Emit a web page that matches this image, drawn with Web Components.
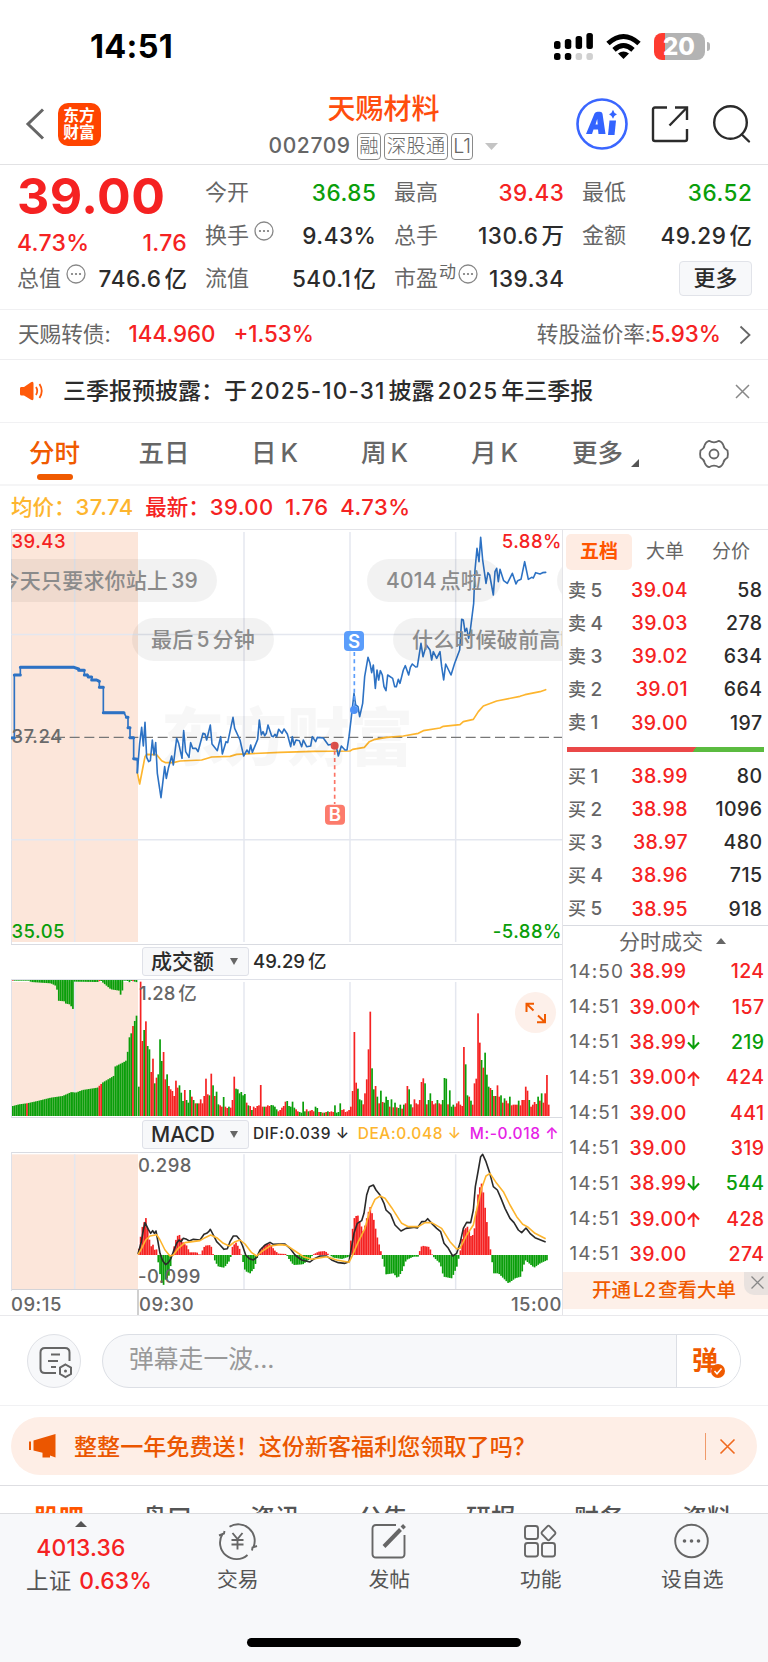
<!DOCTYPE html>
<html lang="zh-CN">
<head>
<meta charset="utf-8">
<title>天赐材料 002709</title>
<style>
	html {
		--red: #f52222;
		--green: #0a9e0a;
		--brand: #f05a00;
		--text: #2b2b2b;
		--muted: #666;
		--line: #ebebed;
		--grid: #e4e7ef;
		--peach: #fce6da;
		--amber: #fdb52e;
	}
	body {
		margin: 0;
		width: 768px;
		height: 1662px;
		overflow: hidden;
		background: #fff;
		color: var(--text);
		font-family: Inter, "Noto Sans CJK SC", sans-serif;
		font-size: 22px;
		line-height: 1.2;
	}
</style>
</head>
<body>
<stock-page></stock-page>

<script>
(function() {
	/**
	 * Small base class, every component only gives its css and html
	*/
	class BaseElement extends HTMLElement {
		constructor() {
			super();
			this.rendered = false;
		}

		styles() {
			return '';
		}

		markup() {
			return '<slot></slot>';
		}

		connectedCallback() {
			if (!this.rendered) {
				this.attachShadow({mode: 'open'});
				this.shadowRoot.innerHTML = `<style>
					:host { display: block; box-sizing: border-box; }
					* { box-sizing: border-box; }
					svg { display: block; overflow: visible; }
					${this.styles()}
				</style>${this.markup()}`;
				this.rendered = true;
			}
		}
	}

	class StatusBar extends BaseElement {
		styles() {
			return `
			:host { display: flex; height: 82px; padding: 10px 58.500px 0 90px; align-items: center; justify-content: space-between; color: #000; }
			.time { font-size: 32.500px; font-weight: 700; letter-spacing: 0.300px; }
			.right { display: flex; align-items: center; gap: 13px; }
			.battery { position: relative; width: 51px; height: 27px; border-radius: 8px; overflow: hidden; background: linear-gradient(90deg, #fe3b30 10.5px, #b3b3b3 10.5px); color: #fff; font-size: 24px; font-weight: 800; line-height: 27px; text-align: center; }
			.tip { width: 3px; height: 9px; border-radius: 0 3px 3px 0; background: #b3b3b3; margin-left: -11px; }`;
		}

		markup() {
			return `<div class="time">14:51</div>
			<div class="right">
				<svg width="39" height="27" viewBox="0 0 39 27">
					<g>
						<rect x="0" y="8" width="6.500" height="8" rx="2.500"/><rect x="10.800" y="6" width="6.500" height="10" rx="2.500"/>
						<rect x="21.600" y="3" width="6.500" height="13" rx="2.500"/><rect x="32.400" y="0" width="6.500" height="16" rx="2.500"/>
						<rect x="0" y="20" width="6.500" height="7" rx="2.500"/><rect x="10.800" y="20" width="6.500" height="7" rx="2.500"/>
					</g>
					<g fill="#d0d0d0"><rect x="21.600" y="20" width="6.500" height="7" rx="2.500"/><rect x="32.400" y="20" width="6.500" height="7" rx="2.500"/></g>
				</svg>
				<svg width="35" height="25" viewBox="0 0 35 25" fill="none" stroke="#000" stroke-width="5">
					<path d="M2 9.500Q17.500 -4.500 33 9.500"/><path d="M8 15.800Q17.500 7.200 27 15.800"/>
					<path d="M12 19.500Q17.500 15.500 23 19.500L17.500 25Z" fill="#000" stroke="none"/>
				</svg>
				<div class="battery">20</div>
				<div class="tip"></div>
			</div>`;
		}
	}

	class StockHeader extends BaseElement {
		styles() {
			return `
			:host { display: grid; grid-template-columns: 200px 1fr 200px; height: 83px; padding: 0 18px 0 25px; border-bottom: 1px solid #e2e2e4; }
			.left, .right { display: flex; align-items: center; padding-top: 2px; }
			.left { gap: 12px; }
			.right { justify-content: flex-end; gap: 23px; }
			.logo { width: 43px; height: 43px; border-radius: 10px; background: #ff4400; color: #fff; font-size: 15.800px; line-height: 17.500px; font-weight: 700; text-align: center; padding-top: 4px; margin-left: 0.500px; }
			.mid { display: flex; flex-direction: column; align-items: center; }
			.name { color: #ff4d0d; font-size: 28px; font-weight: 500; line-height: 36px; margin-top: 9px; margin-left: -8px; }
			.code { display: flex; align-items: center; gap: 3px; color: var(--muted); font-size: 21px; letter-spacing: 0.600px; height: 28px; margin: 5px 0 0 -8px; }
			.code b { font-weight: 500; margin-right: 3px; }
			.code i { font-style: normal; font-size: 19.500px; font-weight: 300; line-height: 24px; height: 27px; padding: 0 1.500px; border: 1.500px solid #8a8a8a; border-radius: 4px; letter-spacing: 0; }
			.code svg { margin-left: 9px; }`;
		}

		markup() {
			return `<div class="left">
				<svg width="20" height="32" viewBox="0 0 20 32" fill="none" stroke="#666" stroke-width="3"><path d="M18 1.500L3 16L18 30.500"/></svg>
				<div class="logo">东方<br>财富</div>
			</div>
			<div class="mid">
				<div class="name">天赐材料</div>
				<div class="code"><b>002709</b><i>融</i><i>深股通</i><i>L1</i>
					<svg width="13" height="7" viewBox="0 0 13 7" fill="#c4c4c4"><path d="M0 0H13L6.500 7Z"/></svg>
				</div>
			</div>
			<div class="right">
				<svg width="52" height="52" viewBox="0 0 52 52">
					<circle cx="26" cy="26" r="24.500" fill="none" stroke="#3a66ff" stroke-width="2.600"/>
					<g fill="#3363ff"><path d="M10 36L18.500 15.500Q19.500 13.800 21.500 13.800H24Q26 13.800 26.500 15.800L29.500 36H22.500L22 31.500H17.500L16 36ZM19.500 26.500H21.700L21.200 21Z" fill-rule="evenodd"/>
					<path d="M33.500 22.500H40L38.500 37H32Z"/><path d="M37 11.800Q37.800 15.300 41 16.300Q37.800 17.300 37 20.800Q36 17.300 33 16.300Q36 15.300 37 11.800Z"/></g>
				</svg>
				<svg width="38" height="38" viewBox="0 0 38 38" fill="none" stroke="#2b2b2b" stroke-width="2.400">
					<path d="M16 2.500H4Q2 2.500 2 4.500V34Q2 36 4 36H34Q36 36 36 34V24"/><path d="M24 2.500H36V15"/><path d="M18.500 20.500L35.500 3"/>
				</svg>
				<svg width="38" height="38" viewBox="0 0 38 38" fill="none" stroke="#2b2b2b" stroke-width="2.400" stroke-linecap="round">
					<circle cx="18.500" cy="17.500" r="16.300"/><path d="M29.800 29.500L37 36.500"/>
				</svg>
			</div>`;
		}
	}

	/**
	 * label + value pair. tip adds the round dots icon, sup the raised letter
	*/
	class QuoteCell extends BaseElement {
		styles() {
			return `
			:host { display: flex; align-items: center; justify-content: space-between; height: 43px; white-space: nowrap; }
			.label { display: flex; align-items: center; color: var(--muted); }
			.value { font-weight: 500; font-size: 22.500px; letter-spacing: 0.550px; margin-right: -0.500px; }
			.value.up { color: var(--red); }
			.value.down { color: var(--green); }
			sup { font-size: 17px; line-height: 17px; margin: -12px 0 0 1px; }
			svg { margin: -9px 0 0 5px; }
			sup + svg { margin-left: 2px; }`;
		}

		markup() {
			const sup = this.getAttribute('sup');
			return `<span class="label">${this.getAttribute('label')}${sup ? `<sup>${sup}</sup>` : ''}${this.hasAttribute('tip') ?
				`<svg width="20" height="20" viewBox="0 0 20 20"><circle cx="10" cy="10" r="9" fill="none" stroke="#888" stroke-width="1.300"/>
				<g fill="#777"><circle cx="6" cy="10" r="1.100"/><circle cx="10" cy="10" r="1.100"/><circle cx="14" cy="10" r="1.100"/></g></svg>` : ''}</span>
			<span class="value ${this.getAttribute('tone') || ''}"><slot></slot></span>`;
		}
	}

	class QuoteBoard extends BaseElement {
		styles() {
			return `
			:host { display: grid; grid-template-columns: 170px 171px 170px 170px; column-gap: 18px; height: 145px; padding: 6px 15px 0 17px; border-bottom: 1px solid #f0f0f2; }
			:host { grid-template-rows: 43px 43px 43px; }
			.main { grid-row: span 2; color: var(--red); }
			.price { font-size: 50px; font-weight: 700; line-height: 51px; letter-spacing: 0.500px; }
			.delta { display: flex; justify-content: space-between; line-height: 28px; margin-top: 7px; font-weight: 500; font-size: 23px; letter-spacing: 0.300px; }
			.more { justify-self: end; align-self: center; width: 73px; height: 35px; border: 1px solid #e1e3e9; border-radius: 4px; background: #f7f8fa; line-height: 32px; text-align: center; font-weight: 500; }`;
		}

		markup() {
			return `<div class="main"><div class="price">39.00</div><div class="delta"><span>4.73%</span><span>1.76</span></div></div>
			<quote-cell label="今开" tone="down">36.85</quote-cell>
			<quote-cell label="最高" tone="up">39.43</quote-cell>
			<quote-cell label="最低" tone="down">36.52</quote-cell>
			<quote-cell label="换手" tip>9.43%</quote-cell>
			<quote-cell label="总手">130.6<span style="margin-left:3px">万</span></quote-cell>
			<quote-cell label="金额">49.29<span style="margin-left:3px">亿</span></quote-cell>
			<quote-cell label="总值" tip>746.6<span style="margin-left:3px">亿</span></quote-cell>
			<quote-cell label="流值">540.1<span style="margin-left:2px">亿</span></quote-cell>
			<quote-cell label="市盈" sup="动" tip>139.34</quote-cell>
			<div class="more">更多</div>`;
		}
	}

	class BondStrip extends BaseElement {
		styles() {
			return `
			:host { display: flex; align-items: center; height: 50px; padding: 0 17px 0 18px; border-bottom: 1px solid #eeeef0; color: var(--muted); font-size: 21.600px; }
			b { color: var(--red); font-weight: 500; font-size: 22.300px; }
			.gap { margin-left: 18px; }
			.end { margin-left: auto; }
			svg { margin-left: 18px; }`;
		}

		markup() {
			return `<span>天赐转债:</span><b class="gap">144.960</b><b class="gap">+1.53%</b>
			<span class="end">转股溢价率:<b>5.93%</b></span>
			<svg width="12" height="20" viewBox="0 0 12 20" fill="none" stroke="#666" stroke-width="1.800"><path d="M1.500 1.500L10.500 10L1.500 18.500"/></svg>`;
		}
	}

	class NoticeStrip extends BaseElement {
		styles() {
			return `
			:host { display: flex; align-items: center; height: 63px; padding: 0 18px 0 20px; border-bottom: 1px solid #f1f1f3; font-size: 23px; font-weight: 500; }
			p { margin: 0 auto 0 19px; white-space: nowrap; }
			b { font-weight: 500; font-size: 22.500px; margin: 0 3px; letter-spacing: 1.150px; }`;
		}

		markup() {
			return `<svg width="24" height="20" viewBox="0 0 24 20" fill="#ff5a0a"><path d="M1 6H4L11 1.200Q13.500 0 13.500 2.500V17.500Q13.500 20 11 18.800L4 14.500H1.500Q0 14.500 0 13V7.500Q0 6 1 6Z"/>
				<path d="M16 6Q18.500 10 16 14M19.500 3Q24 10 19.500 17" fill="none" stroke="#ff5a0a" stroke-width="1.800"/></svg>
			<p>三季报预披露：于<b>2025-10-31</b>披露<b>2025</b>年三季报</p>
			<svg width="15" height="15" viewBox="0 0 15 15" stroke="#888" stroke-width="1.500"><path d="M1 1L14 14M14 1L1 14"/></svg>`;
		}
	}

	class PeriodTabs extends BaseElement {
		styles() {
			return `
			:host { display: grid; grid-template-columns: 109px 110px 111px 109px 111px 107px 1fr; height: 63px; border-bottom: 2px solid #f5f5f6; font-size: 25.500px; color: var(--muted); }
			span { display: flex; align-items: center; justify-content: center; gap: 4px; font-weight: 500; }
			.on { color: var(--brand); flex-direction: column; gap: 0; padding-top: 11px; }
			.on::after { content: ''; width: 36px; height: 6px; border-radius: 3px; background: var(--brand); margin-top: 5px; }
			.tri { border: 4px solid transparent; border-right-color: #555; border-bottom-color: #555; margin: 18px 0 0 4px; }`;
		}

		markup() {
			return `<span class="on">分时</span><span>五日</span><span>日<i style="font-style:normal">K</i></span><span>周<i style="font-style:normal">K</i></span><span>月<i style="font-style:normal">K</i></span>
			<span style="padding-left:4px">更多<i class="tri"></i></span>
			<span><svg width="30" height="30" viewBox="0 0 30 30" fill="none" stroke="#666" stroke-width="1.800" stroke-linejoin="round" style="margin-left:2px">
				<path d="M10 1.800Q15 5 20 1.800Q23 2.500 24.500 6.500Q24.500 9 28.500 11.500Q29.300 15 28.500 18.500Q24.500 21 24.500 23.500Q23 27.500 20 28.200Q15 25 10 28.200Q7 27.500 5.500 23.500Q5.500 21 1.500 18.500Q0.700 15 1.500 11.500Q5.500 9 5.500 6.500Q7 2.500 10 1.800Z"/><circle cx="15" cy="15" r="4.500"/></svg></span>`;
		}
	}

	class ChartLegend extends BaseElement {
		styles() {
			return `
			:host { display: flex; align-items: center; height: 43px; padding-left: 11px; color: var(--red); font-weight: 500; font-size: 21.500px; }
			b { font-weight: 500; margin-right: 11.500px; letter-spacing: 0.500px; font-size: 22px; }
			.avg { color: var(--amber); }`;
		}

		markup() {
			return `<span class="avg">均价：</span><b class="avg">37.74</b><span>最新：</span><b>39.00</b><b>1.76</b><b>4.73%</b>`;
		}
	}

	/* All panes are drawn on a 3x grid, the viewBox keeps one common x axis */
	const START = 414;
	const STEP = 5.3;
	const END = 1642;

	const prices = '412,758 419,670 425,622 430,678 435,607 440,712 446,725 451,722 457,660 462,705 467,668 472,760 483,833 494,740 499,775 505,745 515,708 520,735 530,655 536,670 546,715 551,632 557,695 567,712 572,668 578,685 588,685 594,695 609,640 615,642 620,660 631,615 636,672 652,692 662,650 667,702 678,665 683,668 699,592 704,625 720,660 731,708 741,690 747,700 752,675 757,697 773,658 778,600 784,645 789,635 794,647 799,640 804,615 815,648 820,650 825,643 830,650 836,628 846,640 852,627 862,642 872,680 877,650 882,675 888,660 898,662 905,680 910,660 920,680 932,678 937,650 947,665 952,652 970,654 985,675 995,673 1004,678 1010,685 1015,708 1024,678 1035,690 1041,690 1047,650 1053,600 1062,520 1067,555 1074,560 1079,590 1088,550 1094,470 1104,412 1110,430 1115,458 1120,435 1126,505 1131,450 1136,480 1141,452 1147,465 1152,500 1158,512 1163,465 1178,475 1184,500 1189,500 1195,478 1200,490 1210,450 1216,437 1226,465 1231,442 1237,432 1247,441 1252,440 1263,370 1269,410 1279,375 1290,390 1295,420 1300,395 1310,415 1320,395 1325,440 1331,480 1337,432 1353,465 1364,430 1379,390 1385,298 1390,300 1395,335 1400,325 1406,355 1411,330 1421,250 1425,150 1431,85 1437,125 1442,52 1448,120 1458,190 1464,158 1469,165 1480,225 1485,155 1490,145 1495,185 1500,148 1511,182 1522,190 1537,160 1548,192 1553,182 1563,178 1574,125 1585,178 1595,172 1600,174 1607,158 1620,162 1628,158 1637,157';
	const averages = '412,758 419,792 435,710 440,703 470,704 485,722 497,728 520,728 540,723 605,720 635,711 690,709 710,703 840,697 940,694 1050,693 1058,688 1093,682 1108,665 1125,658 1160,652 1210,648 1255,640 1270,632 1320,624 1330,619 1380,614 1390,605 1420,598 1435,575 1450,558 1490,543 1560,529 1575,524 1620,515 1637,509';
	const auction = '36,654 43,654 43,465 61,465 61,442 222,442 236,447 236,451 253,451 253,465 262,465 265,471 275,471 275,480 290,480 298,484 298,502 310,502 310,578 372,578 379,592 384,592 384,623 390,623 390,653 401,653 401,716 412,718 412,758';
	const dif = '414,942 424,905 430,870 435,848 445,868 452,880 458,872 463,880 468,873 473,900 480,940 488,962 497,974 505,968 513,955 520,935 530,910 537,900 543,905 550,895 560,898 568,903 580,898 600,900 612,883 620,880 626,875 631,868 640,885 650,905 660,915 672,928 682,926 690,905 700,888 710,888 720,900 728,918 737,945 748,956 760,960 770,952 780,930 795,915 810,907 820,913 840,912 855,912 870,925 885,945 905,960 930,966 940,958 960,948 980,948 995,960 1015,968 1035,970 1047,965 1055,920 1062,880 1072,850 1085,842 1092,820 1100,765 1108,740 1120,735 1128,750 1140,765 1152,790 1158,810 1172,823 1185,855 1203,873 1218,865 1240,862 1252,864 1265,845 1275,845 1283,836 1295,850 1310,865 1322,875 1332,910 1345,925 1358,948 1370,940 1380,910 1390,865 1400,847 1412,848 1420,810 1426,740 1435,690 1442,650 1448,643 1458,665 1468,695 1480,740 1492,750 1503,775 1515,805 1530,835 1542,848 1555,870 1565,878 1578,864 1590,880 1605,893 1637,906';
	const dea = '414,944 425,925 437,900 450,888 470,884 480,900 495,930 510,948 520,945 535,925 555,908 600,902 615,893 632,885 650,893 670,910 688,918 705,905 720,900 735,912 755,938 770,948 785,935 810,918 840,914 860,916 885,933 910,950 935,958 980,950 1010,960 1047,967 1058,945 1075,905 1095,865 1110,810 1125,778 1140,768 1155,775 1175,803 1205,850 1225,860 1255,860 1275,848 1295,848 1325,865 1350,905 1370,927 1380,925 1400,885 1420,855 1432,800 1445,745 1458,708 1470,700 1490,730 1510,755 1530,795 1550,830 1568,853 1582,860 1605,880 1637,896';
	const hist = '414,5 425,80 437,112 447,50 452,25 458,32 465,12 470,18 474,-20 480,-60 488,-98 494,-75 505,-68 512,-30 517,5 523,30 530,55 537,62 550,35 560,28 568,8 590,8 600,-2 606,12 614,28 632,30 638,5 645,-20 655,-35 672,-38 690,-15 697,25 707,38 720,15 725,-5 735,-48 750,-55 762,-40 775,5 790,28 810,35 822,15 835,4 858,3 865,-10 880,-30 908,-28 925,-15 940,2 955,10 975,12 985,2 1000,-8 1025,-12 1047,-5 1050,30 1062,110 1072,122 1082,90 1090,70 1102,120 1110,145 1120,110 1132,50 1143,8 1147,-10 1158,-58 1180,-55 1192,-70 1205,-50 1218,-15 1240,-5 1255,-5 1258,10 1265,28 1288,24 1295,3 1302,-8 1320,-25 1330,-65 1355,-70 1370,-35 1380,10 1390,75 1402,85 1415,50 1423,80 1435,195 1446,218 1455,140 1468,35 1474,-5 1480,-55 1495,-55 1525,-85 1545,-70 1562,-65 1575,-15 1602,-38 1620,-25 1642,-15';
	// one bar a minute, r = up, g = down
	const volumes = 'g88 r403 r225 g258 r284 g210 g200 r132 r172 g98 r115 g125 g230 g165 r192 r110 g125 r90 r80 r75 r60 r106 r85 g92 g70 g45 r78 g48 g40 g78 r58 g48 r38 g38 r38 r50 r38 r60 r112 r65 g62 r127 g92 r60 g73 g35 r32 r28 g57 r28 r24 g28 r25 r48 r118 g82 g80 g68 g72 g62 g66 r40 g32 r30 g18 r28 r24 r30 r32 r93 r28 g28 r28 r32 r30 g33 g32 g28 g20 r14 r18 r25 r30 r43 g45 g30 g28 g43 g25 r20 r14 g12 g10 g43 g14 r20 g14 r16 r18 r14 g28 g24 r12 g12 r10 g10 r12 g14 r12 r14 r12 g32 g10 g12 g38 r18 r20 r12 r14 r18 r28 r75 r252 r100 g82 g50 g47 r35 r68 r110 r200 r313 g143 g80 r90 g58 r38 g76 r42 g40 g58 g48 r28 g50 r26 g40 r26 g24 g34 r22 g34 r38 r90 g80 g35 r26 r50 r38 r35 r48 r102 r113 g98 r35 g48 g68 r45 r35 r38 g48 r38 r35 g48 g114 g112 r35 g77 g28 g34 r28 r38 r44 r34 r30 r207 g155 g62 r58 g46 r34 r98 r112 r308 r220 g168 r145 g190 g124 g88 r84 g78 r60 g60 r92 r58 g62 r40 g53 r46 r38 g58 r32 r34 r34 r34 g46 r32 r48 r48 r88 r76 g48 r28 r34 r42 r36 g58 r46 g68 r40 r68 r123 r34';
	const auctionVolumes = '36,30 55,35 78,38 110,45 150,55 185,60 212,72 225,70 245,78 290,85 305,100 335,118 341,122 342,148 375,165 381,195 384,232 392,250 395,266 402,286 410,310';
	const auctionUnmatched = '36,2 86,2 90,6 150,10 166,18 168,18 170,62 190,64 192,70 210,74 213,90 217,86 218,5 290,6 300,2 304,6 330,28 355,32 357,44 364,44 366,2 380,2 384,10 388,2 410,7';

	const parse = (list) => list.split(' ').map((pair) => pair.split(',').map(Number));

	function valueAt(points, x) {
		const i = points.findIndex((p) => p[0] >= x);
		if (i < 1) {
			return points[i === 0 ? 0 : points.length - 1][1];
		}
		const [x0, y0] = points[i - 1];
		const [x1, y1] = points[i];
		return y0 + (y1 - y0) * (x - x0) / (x1 - x0);
	}

	function bar(x, base, h, color) {
		const y = h > 0 ? base - h : base;
		return `<rect x="${x.toFixed(1)}" y="${y.toFixed(1)}" width="5.1" height="${Math.abs(h).toFixed(1)}" fill="${color}"/>`;
	}

	function gridLines(top, bottom) {
		return `<rect x="33" y="${top}" width="381" height="${bottom - top}" fill="var(--peach)"/>
			<g stroke="var(--grid)" stroke-width="4.500">${[224, 732, 1050, 1367].map((x) => `<path d="M${x} ${top}V${bottom}"/>`).join('')}</g>
			<path d="M34.500 ${top - 6}V${bottom + 6}" stroke="#dfe1e8" stroke-width="3"/>`;
	}

	class PriceChart extends BaseElement {
		styles() {
			return `
			:host { position: relative; height: 415px; overflow: hidden; font-weight: 500; font-size: 18.500px; }
			.tag { position: absolute; line-height: 22px; letter-spacing: 0.500px; }
			.bubble { position: absolute; height: 43px; line-height: 43px; border-radius: 22px; padding: 0 19px; background: rgba(0, 0, 0, 0.05); color: #8b8b8b; font-size: 21px; white-space: nowrap; letter-spacing: 0.200px; }
			.bubble b { font-weight: 500; margin: 0 3px; }
			.mark { position: absolute; left: 150px; top: 168px; font-size: 63px; line-height: 80px; font-weight: 900; color: rgba(0, 0, 0, 0.03); }`;
		}

		markup() {
			const pre = parse(auction);
			const flats = pre.slice(1).map((p, i) => Math.abs(p[1] - pre[i][1]) < 7 ? `M${pre[i]}L${p}` : '').join('');
			return `<div class="mark">东方财富</div>
			<svg width="551" height="415" viewBox="33 27 1653 1245">
				<path d="M33 28.500H1686" stroke="#e4e4e8" stroke-width="3"/>
				${gridLines(36, 1266)}
				<path d="M33 343.500H1686M33 959H1686" stroke="var(--grid)" stroke-width="4.500"/>
				<path d="M33 652H1686" stroke="#777" stroke-width="4" stroke-dasharray="30 14"/>
				<g fill="none" stroke-linejoin="round" stroke-linecap="round">
					<polyline points="${averages}" stroke="var(--amber)" stroke-width="5"/>
					<polyline points="${auction}" stroke="#2d72c4" stroke-width="5"/>
					<path d="${flats}" stroke="#2d72c4" stroke-width="9"/>
					<polyline points="${prices}" stroke="#2d72c4" stroke-width="4.800"/>
				</g>
				<path d="M1063 396V560" stroke="#5b9dfb" stroke-width="5" stroke-dasharray="12 10"/>
				<path d="M1004 692V852" stroke="#fc7465" stroke-width="5" stroke-dasharray="12 10"/>
				<circle cx="1062" cy="570" r="12" fill="#4f93f8"/><circle cx="1004" cy="677" r="12" fill="#e0504c"/>
				<rect x="1032" y="333" width="60" height="60" rx="12" fill="#5b9dfb"/><rect x="975" y="854" width="60" height="60" rx="12" fill="#fc7b6c"/>
				<g fill="#fff" font-size="56" font-weight="600" text-anchor="middle"><text x="1062" y="383">S</text><text x="1005" y="904">B</text></g>
			</svg>
			<span class="tag" style="left:0.5px;top:1px;color:var(--red)">39.43</span>
			<span class="tag" style="right:0;top:1px;color:var(--red)">5.88%</span>
			<span class="tag" style="left:0.5px;top:196px;color:#6a6a6a">37.24</span>
			<span class="tag" style="left:0.5px;bottom:2px;color:var(--green)">35.05</span>
			<span class="tag" style="right:0;bottom:2px;color:var(--green)">-5.88%</span>
			<span class="bubble" style="right:345px;top:30px">今天只要求你站上<b style="margin-right:0">39</b></span>
			<span class="bubble" style="left:121px;top:89px">最后<b>5</b>分钟</span>
			<span class="bubble" style="left:356px;top:30px"><b style="margin-left:0">4014</b>点啦</span>
			<span class="bubble" style="left:382px;top:89px;width:169px;overflow:hidden;border-radius:22px 0 0 22px;padding-right:0">什么时候破前高啊</span>
			<span class="bubble" style="left:546px;top:30px;width:60px"></span>`;
		}
	}

	/**
	 * Header row of an indicator pane: select button on the left, readings in the slot
	*/
	class IndicatorHead extends BaseElement {
		styles() {
			return `
			:host { display: flex; align-items: center; height: 35px; border-top: 1px solid #d9dbe1; padding: 0 0 1px 131px; font-weight: 500; white-space: nowrap; }
			.select { display: flex; align-items: center; justify-content: space-between; width: 107px; height: 29px; padding: 0 10px 0 8px; margin-right: 4px; border: 1px solid #dfe1e8; border-radius: 3px; background: #f7f8fa; font-size: 21px; line-height: 27px; }
			.select i { border: 4.500px solid transparent; border-top: 7px solid #666; border-bottom: 0; }`;
		}

		markup() {
			return `<div class="select">${this.getAttribute('name')}<i></i></div><slot></slot>`;
		}
	}

	class VolumeChart extends BaseElement {
		styles() {
			return `
			:host { position: relative; height: 138px; }
			.tag { position: absolute; left: 128px; top: 3px; font-size: 18.500px; line-height: 22px; color: #666; font-weight: 500; }
			.zoom { position: absolute; left: 504px; top: 13px; }`;
		}

		markup() {
			const pre = parse(auctionVolumes);
			const left = parse(auctionUnmatched);
			let bars = '';
			for (let i = 0; i < 71; i++) {
				const x = 36 + i * STEP;
				const up = i === 8 || i === 49 || i === 50 || i === 68;
				bars += bar(x, 528, valueAt(pre, x), up ? '#f52222' : '#0a9e0a');
				bars += bar(x, 120, -valueAt(left, x), i === 0 || i === 49 || i === 68 ? '#f52222' : '#0a9e0a');
			}
			volumes.split(' ').forEach((v, i) => {
				bars += bar(START + i * STEP, 528, Number(v.slice(1)), v[0] === 'r' ? '#f52222' : '#0a9e0a');
			});
			return `<svg width="551" height="138" viewBox="33 117 1653 414">
				<path d="M33 118.500H1686" stroke="#dfe1e8" stroke-width="3"/>
				${gridLines(126, 528)}${bars}
			</svg>
			<span class="tag">1.28<span style="margin-left:3px">亿</span></span>
			<svg class="zoom" width="41" height="41" viewBox="0 0 41 41"><circle cx="20.500" cy="20.500" r="20.500" fill="#fdf0ea"/>
				<g fill="none" stroke="#f05a00" stroke-width="2"><path d="M19 11.800H11.500V20M12 12.300L18.500 18.500"/><path d="M22 30.200H30V22M29.500 29.700L23 23.500"/></g></svg>`;
		}
	}

	class MacdChart extends BaseElement {
		styles() {
			return `
			:host { position: relative; height: 137px; font-size: 18.500px; color: #666; font-weight: 500; }
			.tag { position: absolute; left: 127px; line-height: 22px; letter-spacing: 0.400px; }`;
		}

		markup() {
			const points = parse(hist);
			let bars = '';
			for (let x = START; x < END; x += STEP) {
				const h = valueAt(points, x + 2);
				bars += bar(x, 945, h, h > 0 ? '#f52222' : '#0a9e0a');
			}
			return `<svg width="551" height="137" viewBox="33 636 1653 411">
				<path d="M33 637.500H1686" stroke="#d9dbe1" stroke-width="3"/>
				${gridLines(643, 1047)}${bars}
				<g fill="none" stroke-width="4.800" stroke-linejoin="round"><polyline points="${dif}" stroke="#2a2a2a"/><polyline points="${dea}" stroke="var(--amber)"/></g>
			</svg>
			<span class="tag" style="top:2px">0.298</span>
			<span class="tag" style="top:113px">-0.099</span>`;
		}
	}

	class ChartStack extends BaseElement {
		styles() {
			return `
			:host { display: flex; flex-direction: column; padding-left: 11px; border-right: 1px solid #e4e4e8; }
			.macd { font-size: 15.500px; letter-spacing: 0.600px; display: flex; gap: 8px; }
			.axis { display: flex; height: 26px; border-top: 1px solid #d4d4d8; font-size: 18.500px; line-height: 28px; color: #666; font-weight: 500; letter-spacing: 0.500px; }
			.axis span:first-child { width: 128px; border-right: 2px solid #d0d0d0; }
			.axis span:last-child { margin-left: auto; }`;
		}

		markup() {
			return `<price-chart></price-chart>
			<indicator-head name="成交额"><span style="font-size:18.5px">49.29<span style="margin-left:3px">亿</span></span></indicator-head>
			<volume-chart></volume-chart>
			<indicator-head name="MACD"><span class="macd"><span>DIF:0.039 ↓</span><span style="color:var(--amber)">DEA:0.048 ↓</span><span style="color:#e622e6">M:-0.018 ↑</span></span></indicator-head>
			<macd-chart></macd-chart>
			<div class="axis"><span>09:15</span><span>09:30</span><span>15:00</span></div>`;
		}
	}

	class OrderBook extends BaseElement {
		styles() {
			return `
			:host { font-size: 19.500px; font-weight: 500; border-bottom: 1px solid #d9dbe1; height: 397px; border-top: 1px solid #e4e4e8; }
			.tabs { display: flex; height: 44px; padding: 4px 3px 0; color: var(--muted); font-size: 19px; }
			.tabs span { width: 66px; height: 36px; line-height: 36px; text-align: center; border-radius: 5px; font-weight: 400; }
			.tabs .on { background: #feece3; color: #ff5500; font-weight: 700; }
			.row { display: grid; grid-template-columns: 50px 70px 1fr; height: 33.200px; align-items: center; padding: 0 5.500px 0 5px; text-align: right; letter-spacing: 0.450px; }
			.row span { text-align: left; color: var(--muted); font-weight: 500; font-size: 18px; line-height: 24px; }
			.row span i { font-style: normal; margin-left: 4px; font-size: 19px; }
			.row b { font-weight: 500; color: var(--red); }
			.ratio { height: 5px; margin: 7px 4px 8px; background: linear-gradient(120deg, #ea4848 64.5%, #5bbb40 64.5%); }`;
		}

		row(label, level, price, count) {
			return `<div class="row"><span>${label}<i>${level}</i></span><b>${price}</b><em style="font-style:normal">${count}</em></div>`;
		}

		markup() {
			const asks = [[5, '39.04', 58], [4, '39.03', 278], [3, '39.02', 634], [2, '39.01', 664], [1, '39.00', 197]];
			const bids = [[1, '38.99', 80], [2, '38.98', 1096], [3, '38.97', 480], [4, '38.96', 715], [5, '38.95', 918]];
			return `<div class="tabs"><span class="on">五档</span><span>大单</span><span>分价</span></div>
			${asks.map((r) => this.row('卖', ...r)).join('')}
			<div class="ratio"></div>
			${bids.map((r) => this.row('买', ...r)).join('')}`;
		}
	}

	class TradeList extends BaseElement {
		styles() {
			return `
			:host { font-size: 19.500px; font-weight: 500; }
			.title { display: flex; align-items: center; justify-content: center; gap: 13px; height: 28.500px; padding-top: 2px; padding-left: 14px; color: var(--muted); font-size: 21px; font-weight: 400; }
			.title i { border: 5px solid transparent; border-bottom: 6px solid #666; border-top: 0; }
			.row { display: grid; grid-template-columns: 60px 64px 1fr; height: 35.300px; align-items: center; padding: 0 4px 0 6.500px; color: var(--red); letter-spacing: 0.400px; white-space: nowrap; }
			.row span { color: var(--muted); font-weight: 400; font-size: 19px; letter-spacing: 1.100px; }
			.row b { display: flex; align-items: center; font-weight: 500; letter-spacing: 0.550px; }
			.row em { font-style: normal; text-align: right; margin-right: -0.500px; }
			.down { color: var(--green); }
			.l2 { position: relative; height: 37px; background: #fdf0e9; color: var(--brand); font-size: 19.500px; line-height: 36px; padding-left: 29px; font-weight: 500; white-space: nowrap; }
			.x { position: absolute; right: 0; top: 0; width: 24px; height: 23px; border-radius: 0 0 0 10px; background: #e9e2df; padding: 4px 0 0 7px; }`;
		}

		row([time, price, dir, count]) {
			const arrow = dir ? `<svg class="${dir}" width="13" height="15" viewBox="0 0 13 15" fill="none" stroke="currentColor" stroke-width="2" ${dir === 'down' ? 'style="transform:scaleY(-1)"' : ''}><path d="M6.500 15V2M1 7.500L6.500 1.800L12 7.500"/></svg>` : '';
			return `<div class="row"><span>${time}</span><b>${price}${arrow}</b><em class="${dir}">${count}</em></div>`;
		}

		markup() {
			const trades = [['14:50', '38.99', '', 124], ['14:51', '39.00', 'up', 157], ['14:51', '38.99', 'down', 219], ['14:51', '39.00', 'up', 424],
				['14:51', '39.00', '', 441], ['14:51', '39.00', '', 319], ['14:51', '38.99', 'down', 544], ['14:51', '39.00', 'up', 428], ['14:51', '39.00', '', 274]];
			return `<div class="title">分时成交<i></i></div>
			${trades.map((t) => this.row(t)).join('')}
			<div class="l2">开通<span style="margin:0 2px 0 2px">L2</span>查看大单<div class="x"><svg width="13" height="13" viewBox="0 0 13 13" stroke="#888" stroke-width="1.300"><path d="M0.500 0.500L12.500 12.500M12.500 0.500L0.500 12.500"/></svg></div></div>`;
		}
	}

	class DanmuBar extends BaseElement {
		styles() {
			return `
			:host { display: flex; align-items: center; height: 91px; padding: 0 27px; gap: 21px; border-top: 1px solid #e9e9ec; border-bottom: 1px solid #f1f1f3; }
			.round { width: 54px; height: 54px; border-radius: 27px; border: 1px solid #dfe1e6; background: #f7f8fa; padding: 12px 0 0 11px; }
			.input { flex: 1; display: flex; height: 54px; border: 1px solid #dcdfe5; border-radius: 27px; background: #f7f8fa; overflow: hidden; }
			.hint { flex: 1; padding-left: 26px; line-height: 49px; font-size: 24.800px; color: #999; }
			.send { position: relative; width: 64px; border-left: 1px solid #dcdfe5; background: #fff; color: var(--brand); font-size: 26px; font-weight: 700; line-height: 51px; padding-left: 15px; }
			.send svg { position: absolute; left: 34px; top: 29px; }`;
		}

		markup() {
			return `<div class="round"><svg width="34" height="32" viewBox="0 0 34 32" fill="none" stroke="#666" stroke-width="2">
					<path d="M17 26H6Q1.500 26 1.500 21.500V5.500Q1.500 1 6 1H26Q30.500 1 30.500 5.500V14"/><path d="M12 7.500H21M9 14H19M12 20H17"/>
					<path d="M26.500 17.500L32 20.700V27L26.500 30.200L21 27V20.700Z"/><circle cx="26.500" cy="24" r="1.500" fill="#666" stroke="none"/></svg></div>
			<div class="input"><div class="hint">弹幕走一波...</div>
				<div class="send">弹<svg width="14" height="14" viewBox="0 0 14 14"><circle cx="7" cy="7" r="7" fill="#f05a00"/><path d="M3.500 7L6 9.700L10.500 4.500" fill="none" stroke="#fff" stroke-width="1.600"/></svg></div>
			</div>`;
		}
	}

	class PromoBanner extends BaseElement {
		styles() {
			return `
			:host { height: 80px; padding: 11px 11px 0; border-bottom: 1px solid #dedee2; }
			.pill { display: flex; align-items: center; height: 58px; border-radius: 29px; background: #feeee6; color: #eb5600; padding: 0 22px 0 18px; font-size: 23.100px; font-weight: 500; }
			.pill p { margin: 0 auto 0 18px; line-height: 30px; padding-top: 2px; }
			.bar { width: 1.500px; height: 27px; background: #f09a6a; margin-right: 14px; }`;
		}

		markup() {
			return `<div class="pill">
				<svg width="27" height="24" viewBox="0 0 27 24" fill="#eb5600"><path d="M0 7.500H2V16H0ZM4.500 6.500L26.500 0V23.500L21 21.500V23.500H13.500V18.800L4.500 16.500Z"/></svg>
				<p>整整一年免费送！这份新客福利您领取了吗？</p>
				<div class="bar"></div>
				<svg width="15" height="15" viewBox="0 0 15 15" stroke="#f06a20" stroke-width="1.600"><path d="M0.500 0.500L14.500 14.500M14.500 0.500L0.500 14.500"/></svg>
			</div>`;
		}
	}

	class SectionTabs extends BaseElement {
		styles() {
			return `
			:host { display: grid; grid-template-columns: repeat(7, 108px); height: 27px; overflow: hidden; padding: 18.500px 0 0 5px; font-size: 25px; line-height: 27px; font-weight: 500; color: #555; text-align: center; }
			.on { color: #ff5500; font-weight: 700; }`;
		}

		markup() {
			return `<span class="on">股吧</span><span>盘口</span><span>资讯</span><span>公告</span><span>研报</span><span>财务</span><span>资料</span>`;
		}
	}

	class NavItem extends BaseElement {
		styles() {
			return `
			:host { display: flex; flex-direction: column; align-items: center; padding-top: 9px; font-size: 20.800px; color: #555; }
			span { line-height: 26px; margin-top: 7px; }`;
		}

		markup() {
			const icons = {
				trade: '<path d="M10.500 3.800A16.500 16.500 0 0 1 34.500 24M33 27.500L33.500 24.500L38 23M28.500 32A16.500 16.500 0 0 1 3.500 11M0 12.500L5 10.500L5.500 8"/><path d="M13.500 10L18.500 16L23.500 10M18.500 16V26.500M12.500 17H24.500M12.500 21.500H24.500"/>',
				post: '<path d="M26 2H6Q2.500 2 2.500 5.500V31Q2.500 34.500 6 34.500H31Q34.500 34.500 34.500 31V12"/><path d="M14 23.500L30.500 6.500" stroke-width="4"/><path d="M32 5L34.500 2.500" stroke-width="4"/>',
				apps: '<rect x="3" y="3" width="13" height="13" rx="2.500"/><rect x="3" y="20" width="13" height="13.500" rx="2.500"/><rect x="20" y="20" width="13" height="13.500" rx="2.500"/><path d="M25.300 3.300Q26.500 2 27.700 3.300L33 8.800Q34 10 33 11.200L27.700 16.700Q26.500 18 25.300 16.700L20 11.200Q19 10 20 8.800Z"/>',
				more: '<circle cx="18.500" cy="18" r="16.300"/><g fill="#666" stroke="none"><circle cx="11.500" cy="18" r="1.800"/><circle cx="18.500" cy="18" r="1.800"/><circle cx="25.500" cy="18" r="1.800"/></g>'
			};
			return `<svg width="38" height="37" viewBox="0 0 38 37" fill="none" stroke="#666" stroke-width="1.900">${icons[this.getAttribute('icon')]}</svg><span><slot></slot></span>`;
		}
	}

	class BottomNav extends BaseElement {
		styles() {
			return `
			:host { display: grid; grid-template-columns: 162px repeat(4, 151.500px); grid-template-rows: 96px 1fr; height: 149px; background: #f7f8fa; border-top: 1px solid #dcdde0; }
			.index { display: flex; flex-direction: column; align-items: center; padding-top: 7px; color: var(--red); font-weight: 500; font-size: 22.800px; letter-spacing: 0.200px; white-space: nowrap; }
			.index i { border: 6px solid transparent; border-bottom: 6px solid #555; border-top: 0; }
			.index b { font-weight: 500; line-height: 32px; margin-top: 5px; }
			.index span { line-height: 33px; padding-left: 16px; }
			.index em { font-style: normal; font-weight: 400; color: #555; margin-right: 8px; font-size: 22.500px; }
			.home { grid-column: 1 / -1; justify-self: center; width: 274px; height: 9px; border-radius: 5px; background: #000; margin-top: 28px; }`;
		}

		markup() {
			return `<div class="index"><i></i><b>4013.36</b><span><em>上证</em>0.63%</span></div>
			<nav-item icon="trade">交易</nav-item><nav-item icon="post">发帖</nav-item><nav-item icon="apps">功能</nav-item><nav-item icon="more">设自选</nav-item>
			<div class="home"></div>`;
		}
	}

	class StockPage extends BaseElement {
		styles() {
			return `
			.body { display: grid; grid-template-columns: 563px 1fr; height: 786px; }`;
		}

		markup() {
			return `<status-bar></status-bar>
			<stock-header></stock-header>
			<quote-board></quote-board>
			<bond-strip></bond-strip>
			<notice-strip></notice-strip>
			<period-tabs></period-tabs>
			<chart-legend></chart-legend>
			<div class="body">
				<chart-stack></chart-stack>
				<div><order-book></order-book><trade-list></trade-list></div>
			</div>
			<danmu-bar></danmu-bar>
			<promo-banner></promo-banner>
			<section-tabs></section-tabs>
			<bottom-nav></bottom-nav>`;
		}
	}

	function defineElements() {
		customElements.define('status-bar', StatusBar);
		customElements.define('stock-header', StockHeader);
		customElements.define('quote-cell', QuoteCell);
		customElements.define('quote-board', QuoteBoard);
		customElements.define('bond-strip', BondStrip);
		customElements.define('notice-strip', NoticeStrip);
		customElements.define('period-tabs', PeriodTabs);
		customElements.define('chart-legend', ChartLegend);
		customElements.define('price-chart', PriceChart);
		customElements.define('indicator-head', IndicatorHead);
		customElements.define('volume-chart', VolumeChart);
		customElements.define('macd-chart', MacdChart);
		customElements.define('chart-stack', ChartStack);
		customElements.define('order-book', OrderBook);
		customElements.define('trade-list', TradeList);
		customElements.define('danmu-bar', DanmuBar);
		customElements.define('promo-banner', PromoBanner);
		customElements.define('section-tabs', SectionTabs);
		customElements.define('nav-item', NavItem);
		customElements.define('bottom-nav', BottomNav);
		customElements.define('stock-page', StockPage);
	}

	defineElements();
})();
</script>
</body>
</html>
